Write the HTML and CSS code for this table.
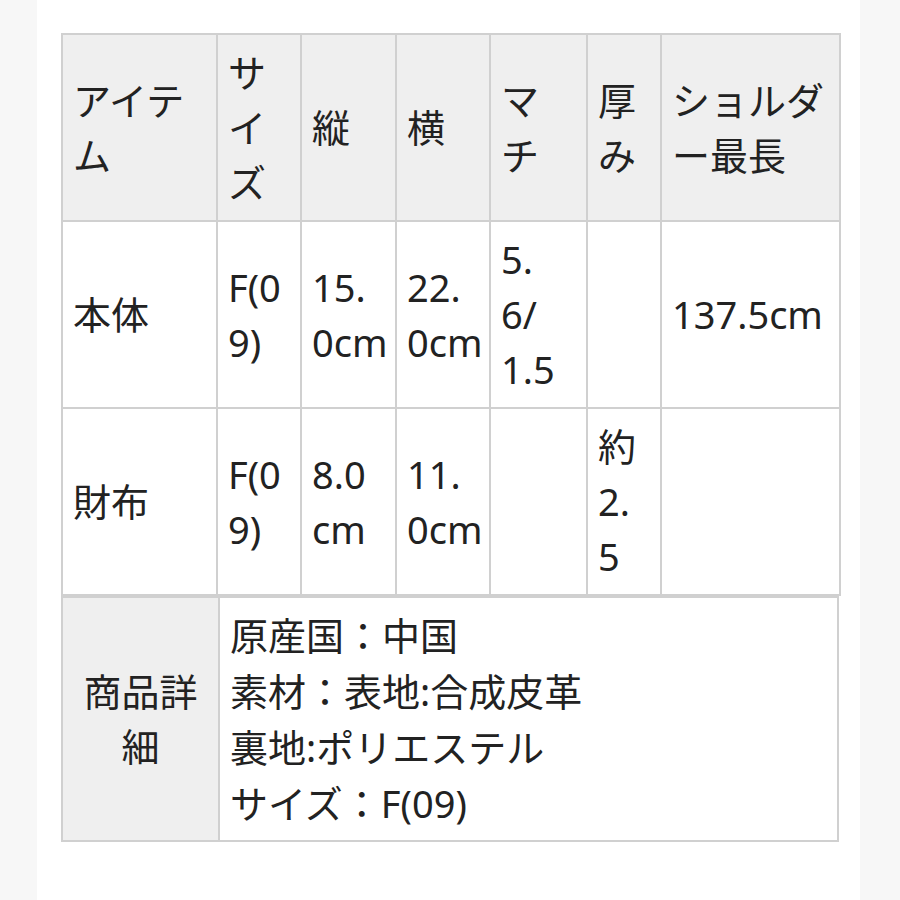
FILE: index.html
```html
<!DOCTYPE html>
<html lang="ja">
<head>
<meta charset="utf-8">
<title>商品サイズ</title>
<link rel="stylesheet" href="styles.css">
</head>
<body>
<div class="page">
  <table class="spec">
    <colgroup>
      <col class="w-item"><col class="w-size"><col class="w-h"><col class="w-w"><col class="w-gusset"><col class="w-thick"><col class="w-strap">
    </colgroup>
    <tr class="head">
      <th>アイテ<br>ム</th>
      <th>サ<br>イ<br>ズ</th>
      <th>縦</th>
      <th>横</th>
      <th>マ<br>チ</th>
      <th>厚<br>み</th>
      <th>ショルダ<br>ー最長</th>
    </tr>
    <tr>
      <td>本体</td>
      <td>F(0<br>9)</td>
      <td>15.<br>0cm</td>
      <td>22.<br>0cm</td>
      <td>5.<br>6/<br>1.5</td>
      <td></td>
      <td>137.5cm</td>
    </tr>
    <tr>
      <td>財布</td>
      <td>F(0<br>9)</td>
      <td>8.0<br>cm</td>
      <td>11.<br>0cm</td>
      <td></td>
      <td>約<br>2.<br>5</td>
      <td></td>
    </tr>
  </table>
  <table class="detail">
    <colgroup><col class="w-label"><col></colgroup>
    <tr>
      <th>商品詳<br>細</th>
      <td>原産国：中国<br>素材：表地:合成皮革<br>裏地:ポリエステル<br>サイズ：F(09)</td>
    </tr>
  </table>
</div>
</body>
</html>
```

FILE: styles.css
```css
html, body {
  margin: 0;
  padding: 0;
}
body {
  background: #f7f7f7;
  font-family: "Noto Sans", "Noto Sans CJK JP", sans-serif;
  color: #222;
}
.page {
  margin-left: 37px;
  width: 823px;
  min-height: 900px;
  background: #fff;
  padding: 33px 0 0 24px;
  box-sizing: border-box;
}
table {
  border-collapse: collapse;
  table-layout: fixed;
  width: 778px;
  font-size: 38px;
  line-height: 55px;
}
th, td {
  border: 2px solid #d0d0d0;
  padding: 10px 4px 10px 10px;
  text-align: left;
  vertical-align: middle;
  font-weight: normal;
  white-space: nowrap;
}
th {
  background: #efefef;
}
.w-item { width: 155px; }
.w-size { width: 84px; }
.w-h { width: 95px; }
.w-w { width: 94px; }
.w-gusset { width: 97px; }
.w-thick { width: 74px; }
.w-strap { width: 179px; }
.w-label { width: 157px; }
.detail th {
  text-align: center;
  padding-left: 4px;
}
.detail td {
  line-height: 56px;
  padding-top: 9px;
  padding-bottom: 9px;
}
```
